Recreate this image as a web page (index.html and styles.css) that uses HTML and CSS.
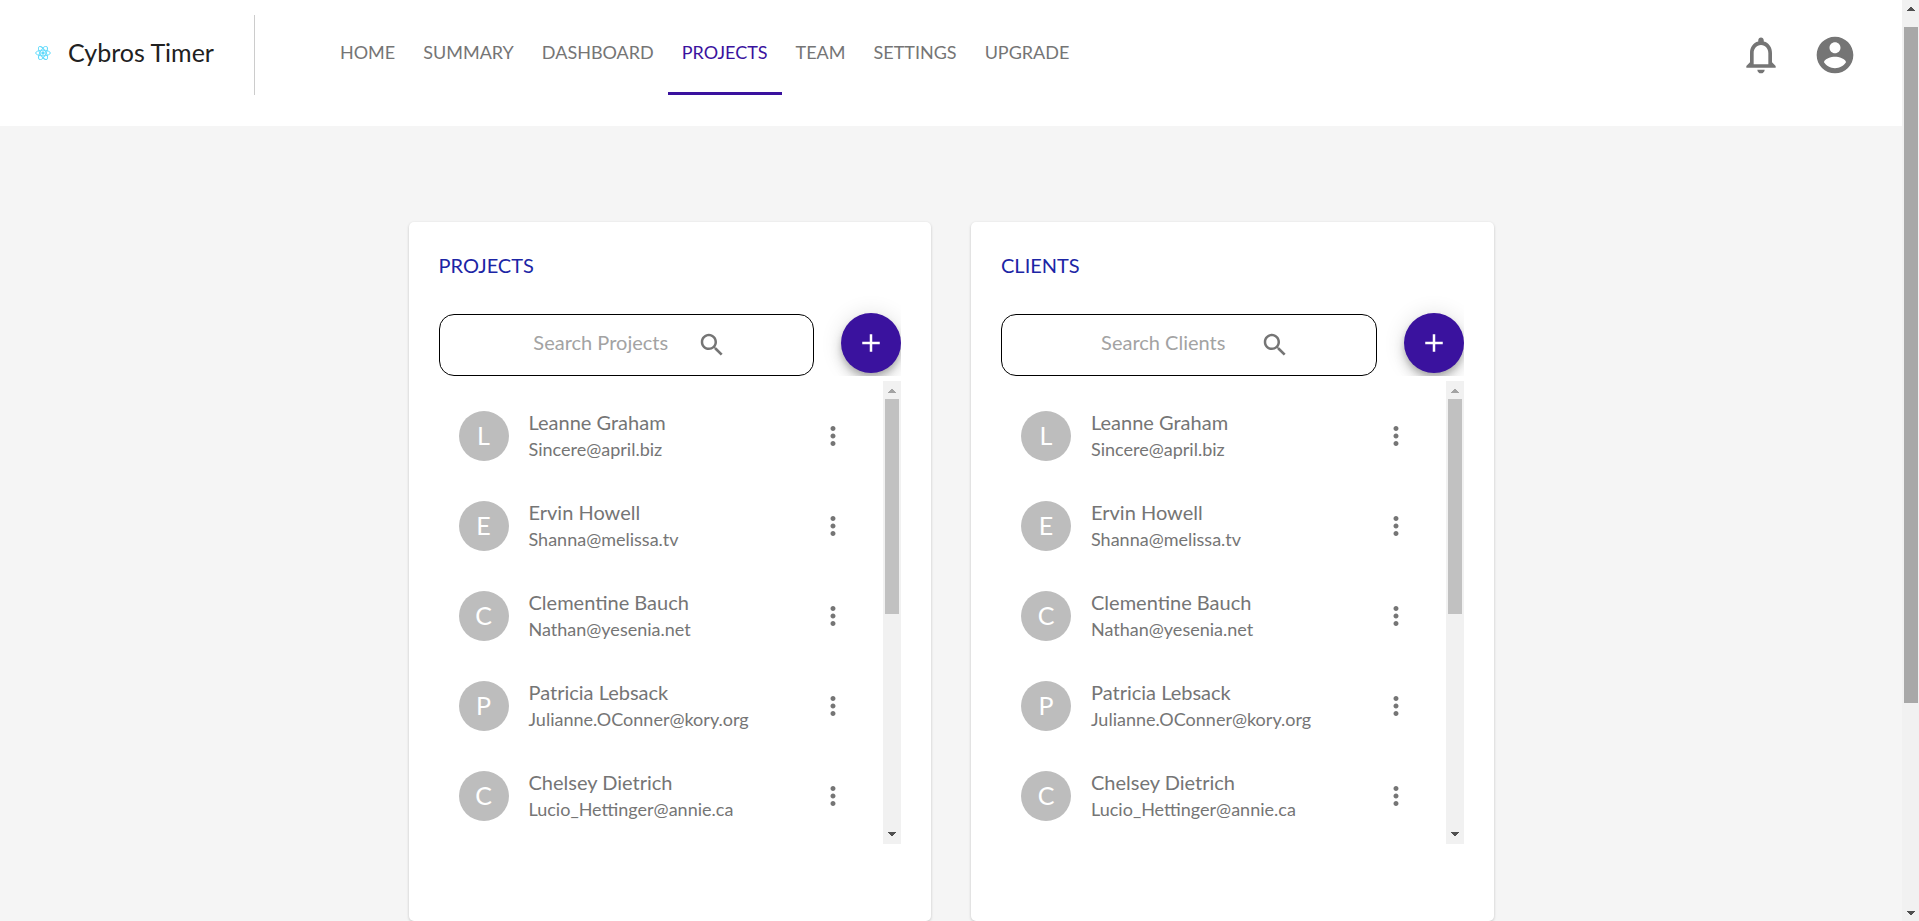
FILE: index.html
```html
<!DOCTYPE html>
<html lang="en">
<head>
<meta charset="utf-8">
<title>Cybros Timer</title>
<link rel="stylesheet" href="styles.css">
</head>
<body>
<svg class="sprite" aria-hidden="true">
  <symbol id="search" viewBox="0 0 24 24"><path d="M15.5 14h-.79l-.28-.27C15.41 12.59 16 11.11 16 9.5 16 5.91 13.09 3 9.5 3S3 5.91 3 9.5 5.91 16 9.5 16c1.61 0 3.09-.59 4.23-1.57l.27.28v.79l5 4.99L20.49 19l-4.99-5zm-6 0C7.01 14 5 11.99 5 9.5S7.01 5 9.5 5 14 7.01 14 9.5 11.99 14 9.5 14z"/></symbol>
  <symbol id="plus" viewBox="0 0 24 24"><path d="M19 13h-6v6h-2v-6H5v-2h6V5h2v6h6v2z"/></symbol>
  <symbol id="more" viewBox="0 0 24 24"><path d="M12 8c1.1 0 2-.9 2-2s-.9-2-2-2-2 .9-2 2 .9 2 2 2zm0 2c-1.1 0-2 .9-2 2s.9 2 2 2 2-.9 2-2-.9-2-2-2zm0 6c-1.1 0-2 .9-2 2s.9 2 2 2 2-.9 2-2-.9-2-2-2z"/></symbol>
  <symbol id="up" viewBox="0 0 8 4"><path d="M3 0h2v1h1v1h1v1h1v1H0V3h1V2h1V1h1z"/></symbol>
  <symbol id="down" viewBox="0 0 8 4"><path d="M0 0h8v1H7v1H6v1H5v1H3V3H2V2H1V1H0z"/></symbol>
</svg>
<div class="window">
  <div class="page">
    <header class="header">
      <a class="brand" href="#">
        <svg class="logo" viewBox="-12 -11 24 22" aria-hidden="true">
          <circle r="2"/>
          <g fill="none" stroke-width="1.4">
            <ellipse rx="11" ry="4.2"/>
            <ellipse rx="11" ry="4.2" transform="rotate(60)"/>
            <ellipse rx="11" ry="4.2" transform="rotate(120)"/>
          </g>
        </svg>
        <span>Cybros Timer</span>
      </a>
      <nav class="nav">
        <a href="#">HOME</a>
        <a href="#">SUMMARY</a>
        <a href="#">DASHBOARD</a>
        <a class="active" href="#" aria-current="page">PROJECTS</a>
        <a href="#">TEAM</a>
        <a href="#">SETTINGS</a>
        <a href="#">UPGRADE</a>
      </nav>
      <div class="actions">
        <button class="icon-button" aria-label="Notifications"><svg viewBox="0 0 24 24"><path d="M12 22c1.1 0 2-.9 2-2h-4c0 1.1.9 2 2 2zm6-6v-5c0-3.070-1.630-5.640-4.500-6.320V4c0-.83-.67-1.500-1.500-1.500s-1.500.67-1.500 1.500v.68C7.640 5.360 6 7.920 6 11v5l-2 2v1h16v-1l-2-2zm-2 1H8v-6c0-2.480 1.510-4.500 4-4.500s4 2.020 4 4.500v6z"/></svg></button>
        <button class="icon-button" aria-label="Account"><svg viewBox="0 0 24 24"><path d="M12 2C6.480 2 2 6.480 2 12s4.480 10 10 10 10-4.480 10-10S17.520 2 12 2zm0 3c1.660 0 3 1.340 3 3s-1.340 3-3 3-3-1.340-3-3 1.340-3 3-3zm0 14.200c-2.500 0-4.710-1.280-6-3.220.03-1.990 4-3.080 6-3.080 1.990 0 5.970 1.090 6 3.080-1.290 1.940-3.500 3.220-6 3.220z"/></svg></button>
      </div>
    </header>
    <main class="main">
      <section class="card">
        <h2>PROJECTS</h2>
        <div class="tools">
          <label class="search"><input type="text" placeholder="Search Projects" aria-label="Search Projects"><svg><use href="#search"/></svg></label>
          <button class="fab" aria-label="Add project"><svg><use href="#plus"/></svg></button>
        </div>
        <div class="scroller">
          <ul class="people">
            <li><span class="avatar">L</span><div class="who"><p class="name">Leanne Graham</p><p class="mail">Sincere@april.biz</p></div><button class="more" aria-label="More"><svg><use href="#more"/></svg></button></li>
            <li><span class="avatar">E</span><div class="who"><p class="name">Ervin Howell</p><p class="mail">Shanna@melissa.tv</p></div><button class="more" aria-label="More"><svg><use href="#more"/></svg></button></li>
            <li><span class="avatar">C</span><div class="who"><p class="name">Clementine Bauch</p><p class="mail">Nathan@yesenia.net</p></div><button class="more" aria-label="More"><svg><use href="#more"/></svg></button></li>
            <li><span class="avatar">P</span><div class="who"><p class="name">Patricia Lebsack</p><p class="mail">Julianne.OConner@kory.org</p></div><button class="more" aria-label="More"><svg><use href="#more"/></svg></button></li>
            <li><span class="avatar">C</span><div class="who"><p class="name">Chelsey Dietrich</p><p class="mail">Lucio_Hettinger@annie.ca</p></div><button class="more" aria-label="More"><svg><use href="#more"/></svg></button></li>
          </ul>
          <div class="bar"><svg class="off"><use href="#up"/></svg><div class="track"><div class="thumb"></div></div><svg><use href="#down"/></svg></div>
        </div>
      </section>
      <section class="card">
        <h2>CLIENTS</h2>
        <div class="tools">
          <label class="search"><input type="text" placeholder="Search Clients" aria-label="Search Clients"><svg><use href="#search"/></svg></label>
          <button class="fab" aria-label="Add client"><svg><use href="#plus"/></svg></button>
        </div>
        <div class="scroller">
          <ul class="people">
            <li><span class="avatar">L</span><div class="who"><p class="name">Leanne Graham</p><p class="mail">Sincere@april.biz</p></div><button class="more" aria-label="More"><svg><use href="#more"/></svg></button></li>
            <li><span class="avatar">E</span><div class="who"><p class="name">Ervin Howell</p><p class="mail">Shanna@melissa.tv</p></div><button class="more" aria-label="More"><svg><use href="#more"/></svg></button></li>
            <li><span class="avatar">C</span><div class="who"><p class="name">Clementine Bauch</p><p class="mail">Nathan@yesenia.net</p></div><button class="more" aria-label="More"><svg><use href="#more"/></svg></button></li>
            <li><span class="avatar">P</span><div class="who"><p class="name">Patricia Lebsack</p><p class="mail">Julianne.OConner@kory.org</p></div><button class="more" aria-label="More"><svg><use href="#more"/></svg></button></li>
            <li><span class="avatar">C</span><div class="who"><p class="name">Chelsey Dietrich</p><p class="mail">Lucio_Hettinger@annie.ca</p></div><button class="more" aria-label="More"><svg><use href="#more"/></svg></button></li>
          </ul>
          <div class="bar"><svg class="off"><use href="#up"/></svg><div class="track"><div class="thumb"></div></div><svg><use href="#down"/></svg></div>
        </div>
      </section>
    </main>
  </div>
  <div class="bar page-bar"><svg><use href="#up"/></svg><div class="track"><div class="thumb"></div></div><svg><use href="#down"/></svg></div>
</div>
</body>
</html>
```
FILE: styles.css
```css
* {
  box-sizing: border-box;
}

body {
  margin: 0;
  background: #f5f5f5;
  color: #757575;
  font-family: Lato, "Liberation Sans", sans-serif;
  font-size: 20px;
}

h2, p, ul {
  margin: 0;
  padding: 0;
  font-weight: 400;
}

a {
  color: inherit;
  text-decoration: none;
}

button {
  border: 0;
  padding: 0;
  background: none;
  color: inherit;
  cursor: pointer;
}

svg {
  display: block;
  fill: currentColor;
}

.sprite {
  display: none;
}

.window {
  display: flex;
  height: 100vh;
  overflow: hidden;
}

.page {
  flex: 1;
  min-width: 0;
}

/* Header */

.header {
  display: flex;
  align-items: flex-start;
  padding: 15px 45px 31px 35px;
  background: #fff;
}

.brand {
  display: flex;
  align-items: center;
  gap: 17px;
  height: 80px;
  padding: 0 40px 4px 0;
  border-right: 1px solid #ccc;
  color: #212121;
  font-size: 25px;
  line-height: 30px;
}

.brand span {
  padding-bottom: 2px;
}

.logo {
  width: 16px;
  height: 16px;
  color: #61dafb;
  stroke: currentColor;
}

.nav {
  display: flex;
  flex: 1;
  margin-left: 71px;
}

.nav a {
  height: 80px;
  padding: 25px 14px 0;
  border-bottom: 3px solid transparent;
  font-size: 18px;
  line-height: 24px;
}

.nav .active {
  border-color: #3a129e;
  color: #3a129e;
}

.actions {
  display: flex;
  gap: 30px;
  height: 80px;
  align-items: center;
}

.icon-button svg {
  width: 44px;
  height: 44px;
}

/* Cards */

.main {
  display: grid;
  grid-template-columns: repeat(2, minmax(0, 1fr));
  gap: 40px;
  max-width: 1085px;
  margin: 96px auto 0;
}

.card {
  padding: 30px 30px 77px;
  border-radius: 5px;
  background: #fff;
  box-shadow: 0 1px 3px rgba(0, 0, 0, 0.2);
}

.card h2 {
  color: #1c25a5;
  font-size: 20px;
  line-height: 26px;
}

.tools {
  display: flex;
  justify-content: space-between;
  align-items: flex-end;
  gap: 27px;
  padding-top: 35px;
  overflow: hidden;
}

.search {
  display: flex;
  flex: 1;
  align-items: center;
  gap: 10px;
  min-width: 0;
  height: 62px;
  padding: 0 86px 0 75px;
  border: 1px solid #000;
  border-radius: 15px;
}

.search input {
  flex: 1;
  min-width: 0;
  border: 0;
  padding: 0 0 6px;
  outline: 0;
  background: none;
  font: inherit;
  text-align: center;
}

.search input::placeholder {
  color: #a3a3a3;
}

.search svg,
.fab svg,
.more svg {
  width: 30px;
  height: 30px;
}

.fab {
  display: grid;
  place-items: center;
  align-self: flex-start;
  width: 60px;
  height: 60px;
  margin-bottom: 3px;
  border-radius: 50%;
  background: #3a129e;
  color: #fff;
  box-shadow: 0 4px 6px -1px rgba(0, 0, 0, 0.2), 0 8px 12px rgba(0, 0, 0, 0.14), 0 1px 22px rgba(0, 0, 0, 0.12);
}

.scroller {
  display: flex;
  margin-top: 5px;
}

.people {
  flex: 1;
  padding: 10px 20px 3px;
  list-style: none;
}

.people li {
  display: flex;
  align-items: center;
  gap: 20px;
  height: 90px;
}

.avatar {
  display: grid;
  place-items: center;
  width: 50px;
  height: 50px;
  padding-bottom: 2px;
  border-radius: 50%;
  background: #bdbdbd;
  color: #fff;
  font-size: 25px;
  line-height: 30px;
}

.who {
  flex: 1;
  padding-bottom: 2px;
}

.name {
  line-height: 28px;
}

.mail {
  font-size: 18px;
  line-height: 26px;
}

.more {
  margin-right: 15px;
}

/* Scroll bars */

.bar {
  display: flex;
  flex-direction: column;
  align-items: center;
  justify-content: space-between;
  width: 18px;
  padding: 8px 2px;
  background: #f1f1f1;
  color: #505050;
}

.bar svg {
  width: 8px;
  height: 4px;
}

.bar .off {
  color: #a3a3a3;
}

.track {
  flex: 1;
  width: 100%;
  padding: 6px 0;
}

.thumb {
  height: 50.4%;
  background: #c1c1c1;
}

.page-bar {
  width: 17px;
  padding: 7px 1px 6px 2px;
}

.page-bar .track {
  padding: 16px 0 14px;
}

.page-bar .thumb {
  height: 77.7%;
  background: #a8a8a8;
}
```
